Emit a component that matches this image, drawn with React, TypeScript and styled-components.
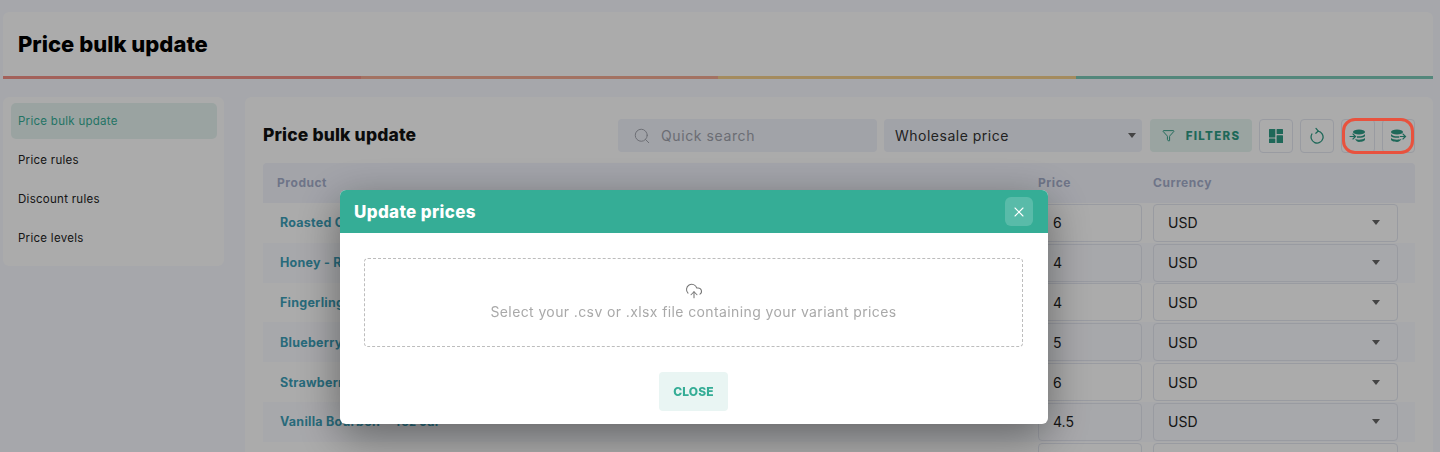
import React from "react";
import styled, { createGlobalStyle } from "styled-components";
import { Search, Funnel, X, CloudUpload } from "lucide-react";

const Global = createGlobalStyle`
  html, body { margin: 0; padding: 0; height: 452px; overflow: hidden; background: #f8f9ff; }
  body { font-family: "Inter", "Liberation Sans", sans-serif; color: #111; }
  * { box-sizing: border-box; }
`;

const Page = styled.div`
  width: 1440px; height: 452px; padding: 12px 7px 0 3px; overflow: hidden;
  display: flex; flex-direction: column; gap: 18px;
`;
const Header = styled.header`
  height: 67px; flex: none; background: #fff; border-radius: 6px 6px 0 0; display: flex; flex-direction: column;
`;
const PageTitle = styled.h1`
  flex: 1; margin: 0; padding: 0 15px; display: flex; align-items: center;
  font: 800 22px "Inter", sans-serif; letter-spacing: 0.02px; color: #000;
`;
const Progress = styled.div` display: grid; grid-template-columns: repeat(4, 1fr); height: 3px; `;
const Segment = styled.span<{ $c: string }>` background: ${p => p.$c}; `;

const Body = styled.div` display: grid; grid-template-columns: 221px 1fr; gap: 21px; flex: 1; min-height: 0; `;
const Side = styled.nav`
  height: 169px; background: #fff; border-radius: 6px; padding: 6px 7px 0 8px;
  display: flex; flex-direction: column; gap: 3px;
`;
const SideItem = styled.a<{ $active?: boolean }>`
  height: 36px; padding: 0 7px; display: flex; align-items: center; border-radius: 5px;
  font: 400 11.5px "Inter", sans-serif; letter-spacing: 0.28px;
  color: ${p => (p.$active ? "#35ad96" : "#222")};
  background: ${p => (p.$active ? "#e6f4f1" : "transparent")};
`;
const Main = styled.main`
  background: #fff; border-radius: 6px 6px 0 0; padding: 22px 18px 0; overflow: hidden;
  display: flex; flex-direction: column; gap: 11px;
`;
const Toolbar = styled.div` height: 33px; flex: none; display: flex; align-items: center; gap: 7px; `;
const CardTitle = styled.h2`
  margin: 0 auto 2px 0; font: 800 17.5px "Inter", sans-serif; letter-spacing: 0.15px; color: #111;
`;
const SearchBox = styled.div`
  width: 259px; height: 33px; background: #f1f3fb; border-radius: 4px; padding: 0 15px;
  display: flex; align-items: center; gap: 10px; color: #a0a3ad; font-size: 14px;
  letter-spacing: 0.6px;
`;
const PriceSelect = styled.div`
  width: 258px; height: 33px; margin-right: 1px; background: #f1f3fb; border-radius: 4px; padding: 0 6px 0 11px;
  display: flex; align-items: center; justify-content: space-between; font-size: 14px; letter-spacing: 0.5px; color: #333;
`;
const Caret = styled.i`
  width: 0; height: 0; border-left: 4.5px solid transparent; border-right: 4.5px solid transparent;
  border-top: 5px solid #666;
`;
const FiltersButton = styled.button`
  width: 102px; height: 33px; border: 0; border-radius: 4px; background: #e6f5f1; color: #2f9c85;
  display: flex; align-items: center; justify-content: center; gap: 11px;
  font: 800 11.5px "Inter", sans-serif; letter-spacing: 1.3px;
`;
const IconButton = styled.button`
  width: 34px; height: 34px; padding: 0; background: #fff; border: 1px solid #e4e7f1; border-radius: 4px; color: #2f9c85;
  display: flex; align-items: center; justify-content: center;
`;
const Group = styled.div` position: relative; display: flex; gap: 7px; width: 74px; `;
const Highlight = styled.span`
  position: absolute; inset: -1px 1px -1px 1px; border: 3px solid #e8523e; border-radius: 13px; z-index: 20;
`;

const Grid = `display: grid; grid-template-columns: 775px 115px 1fr; align-items: center;`;
const TableHead = styled.div`
  ${Grid} height: 40px; flex: none; padding-bottom: 2px; background: #f3f5fd; font: 700 12px "Inter", sans-serif; letter-spacing: 0.55px; color: #a5aecb;
  border-radius: 4px 4px 0 0;
`;
const HeadName = styled.span` padding-left: 14px; `;
const Row = styled.div<{ $alt: boolean }>`
  ${Grid} height: 39.8px; flex: none; background: ${p => (p.$alt ? "#fafbff" : "transparent")};
`;
const Rows = styled.div` display: flex; flex: none; flex-direction: column; margin-top: -11px; `;
const ProductName = styled.a`
  padding-left: 17px; font: 700 12.5px "Inter", sans-serif; letter-spacing: 0.25px; color: #3c9fb8;
`;
const PriceInput = styled.div`
  width: 104px; height: 38px; border: 1px solid #e4e7f1; border-radius: 4px; padding-left: 14px;
  display: flex; align-items: center; font-size: 14px; color: #222;
`;
const CurrencySelect = styled.div`
  width: 245px; height: 38px; border: 1px solid #e4e7f1; border-radius: 4px; padding: 0 17px 0 14px;
  display: flex; align-items: center; justify-content: space-between; font-size: 14px; color: #222;
`;

const Overlay = styled.div`
  position: fixed; inset: 0; z-index: 10; background: rgba(0, 0, 0, 0.33);
  backdrop-filter: blur(0.5px); padding: 190px 0 0 340px;
`;
const Modal = styled.div`
  width: 708px; height: 234px; background: #fff; border-radius: 6px; overflow: hidden;
  box-shadow: 0 12px 44px rgba(0, 0, 0, 0.42);
  display: flex; flex-direction: column;
`;
const ModalHead = styled.div`
  height: 43px; flex: none; padding: 0 15px 0 14px; background: #35ad96; display: flex; align-items: center; justify-content: space-between;
`;
const ModalTitle = styled.h3` margin: 0; font: 800 17px "Inter", sans-serif; letter-spacing: 0.35px; color: #fff; `;
const CloseX = styled.button`
  width: 28px; height: 29px; padding: 0; border: 0; border-radius: 6px; background: rgba(255, 255, 255, 0.18); color: #fff;
  display: flex; align-items: center; justify-content: center;
`;
const ModalBody = styled.div`
  flex: 1; display: flex; flex-direction: column; align-items: center; padding: 25px 25px 0 24px;
`;
const Drop = styled.div`
  width: 100%; height: 89px; border: 1px dashed #bdbdbd; border-radius: 4px; color: #a9a9a9;
  display: flex; flex-direction: column; align-items: center; padding-top: 23px; gap: 3px;
  font-size: 14px; letter-spacing: 0.39px; line-height: 18px;
`;
const CloseButton = styled.button`
  margin-top: 25px; width: 69px; height: 39px; border: 0; border-radius: 4px; background: #e9f5f3; color: #35ad96;
  font: 800 12px "Inter", sans-serif; letter-spacing: 0.1px;
`;

const LayoutIcon = () => (
  <svg width="14" height="14" viewBox="0 0 14 14" fill="currentColor">
    <rect x="0" y="0" width="6.3" height="8.4" rx=".5" />
    <rect x="7.6" y="0" width="6.4" height="5" rx=".5" />
    <rect x="0" y="9.6" width="6.3" height="4.4" rx=".5" />
    <rect x="7.6" y="6.2" width="6.4" height="7.8" rx=".5" />
  </svg>
);
const ReloadIcon = () => (
  <svg width="16" height="17" viewBox="0 0 16 17" fill="none" stroke="currentColor" strokeWidth="1.3" strokeLinecap="round" strokeLinejoin="round">
    <path d="M9 4.100A6 6 0 1 1 2.900 7" />
    <path d="M7 1.400 9.300 4.100 6.800 6.200" />
  </svg>
);
const DbIcon = ({ out }: { out?: boolean }) => (
  <svg width="17" height="14" viewBox="0 0 17 14" fill="currentColor">
    {out ? (
      <g>
        <ellipse cx="7" cy="3" rx="6" ry="2.6" />
        <path d="M1 5c1 1.600 3.400 2.300 6 2.300h2.200v1.500H7C4.600 8.800 2.300 8.300 1 7.200z" />
        <path d="M1 9.100c1.300 1.100 3.600 1.600 6 1.600 1.600 0 3.300-.2 4.600-.9-.8 2-2.800 3.200-4.600 3.200-3.300 0-6-1.100-6-2.400z" />
        <path d="M13 4.300 16.400 7.500 13 10.700 12.200 9.900 14 8.100H9.800V6.900H14L12.200 5.100z" />
      </g>
    ) : (
      <g>
        <ellipse cx="10" cy="3" rx="6" ry="2.6" />
        <path d="M16 5c-1 1.600-3.400 2.300-6 2.300H8v1.500h2c2.400 0 4.700-.5 6-1.600z" />
        <path d="M16 9.100c-1.300 1.100-3.600 1.600-6 1.600-1.300 0-2.700-.2-3.900-.6.900 1.900 2.500 2.900 3.900 2.900 3.300 0 6-1.100 6-2.400z" />
        <path d="M4 4.300 7.400 7.500 4 10.700 3.200 9.900 5 8.100H.6V6.900H5L3.200 5.100z" />
      </g>
    )}
  </svg>
);

const rows = [
  ["Roasted Cashews", "6"],
  ["Honey - Raw Wildflower", "4"],
  ["Fingerling Potatoes", "4"],
  ["Blueberry Jam", "5"],
  ["Strawberry Jam", "6"],
  ["Vanilla Bourbon - 4oz Jar", "4.5"],
];

export default function App() {
  return (
    <>
      <Global />
      <Page>
        <Header>
          <PageTitle>Price bulk update</PageTitle>
          <Progress>
            <Segment $c="#f39186" />
            <Segment $c="#f4ab93" />
            <Segment $c="#f5cf8c" />
            <Segment $c="#7cc9b8" />
          </Progress>
        </Header>
        <Body>
          <Side>
            <SideItem $active>Price bulk update</SideItem>
            <SideItem>Price rules</SideItem>
            <SideItem>Discount rules</SideItem>
            <SideItem>Price levels</SideItem>
          </Side>
          <Main>
            <Toolbar>
              <CardTitle>Price bulk update</CardTitle>
              <SearchBox>
                <Search size={18} strokeWidth={1.3} />
                Quick search
              </SearchBox>
              <PriceSelect>
                Wholesale price
                <Caret />
              </PriceSelect>
              <FiltersButton>
                <Funnel size={13} strokeWidth={1.8} />
                FILTERS
              </FiltersButton>
              <IconButton><LayoutIcon /></IconButton>
              <IconButton><ReloadIcon /></IconButton>
              <Group>
                <IconButton><DbIcon /></IconButton>
                <IconButton><DbIcon out /></IconButton>
                <Highlight />
              </Group>
            </Toolbar>
            <TableHead>
              <HeadName>Product</HeadName>
              <span>Price</span>
              <span>Currency</span>
            </TableHead>
            <Rows>
              {rows.map(([name, price], i) => (
                <Row key={name} $alt={i % 2 === 1}>
                  <ProductName>{name}</ProductName>
                  <PriceInput>{price}</PriceInput>
                  <CurrencySelect>USD<Caret /></CurrencySelect>
                </Row>
              ))}
              <Row $alt={false}>
                <span />
                <PriceInput />
                <CurrencySelect />
              </Row>
            </Rows>
          </Main>
        </Body>
      </Page>
      <Overlay>
        <Modal>
          <ModalHead>
            <ModalTitle>Update prices</ModalTitle>
            <CloseX><X size={16} strokeWidth={1.6} /></CloseX>
          </ModalHead>
          <ModalBody>
            <Drop>
              <CloudUpload size={18} strokeWidth={1.4} color="#777" />
              Select your .csv or .xlsx file containing your variant prices
            </Drop>
            <CloseButton>CLOSE</CloseButton>
          </ModalBody>
        </Modal>
      </Overlay>
    </>
  );
}
